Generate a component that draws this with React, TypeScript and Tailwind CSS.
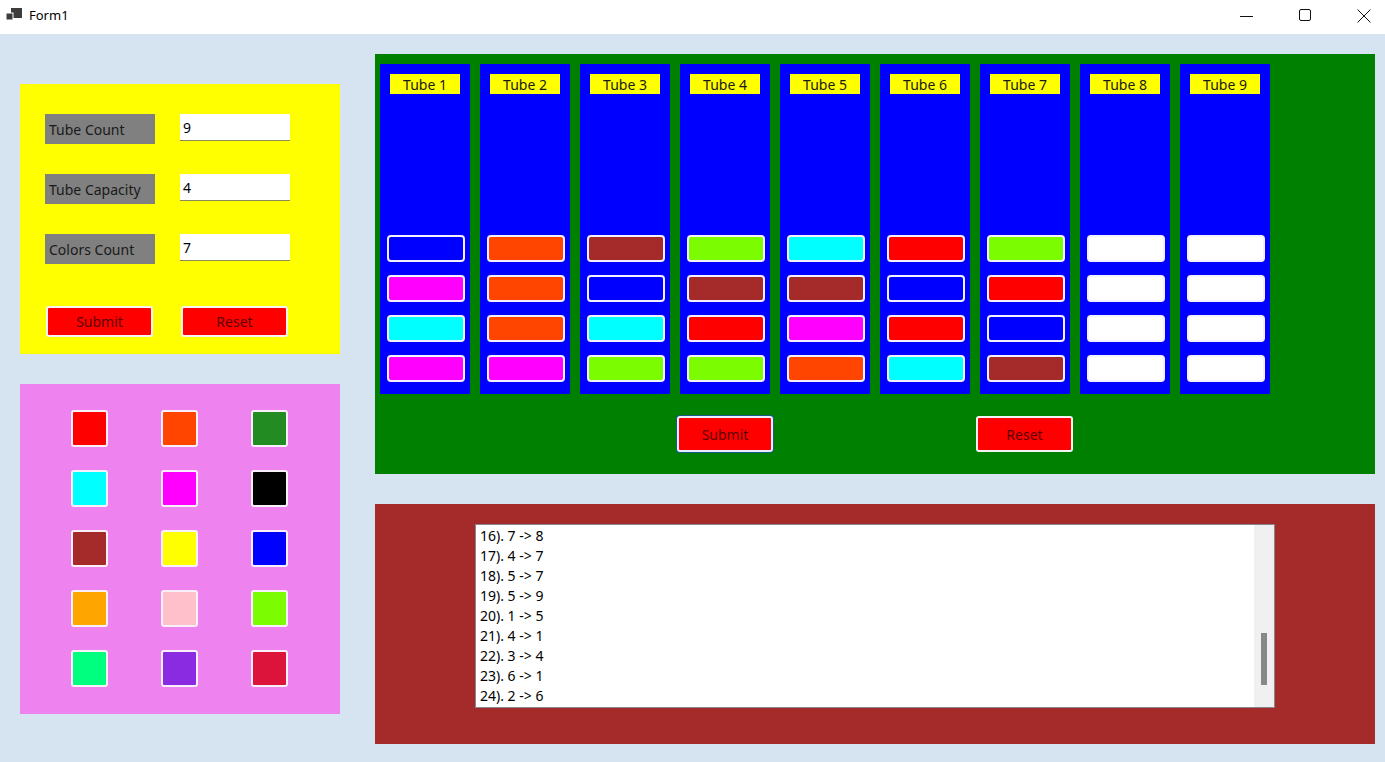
import React from 'react'

const font = { fontFamily: '"Noto Sans", "Open Sans", sans-serif' }

const tubes: string[][] = [
  ['bg-[#0000ff]', 'bg-[#ff00ff]', 'bg-[#00ffff]', 'bg-[#ff00ff]'],
  ['bg-[#ff4500]', 'bg-[#ff4500]', 'bg-[#ff4500]', 'bg-[#ff00ff]'],
  ['bg-[#a52a2a]', 'bg-[#0000ff]', 'bg-[#00ffff]', 'bg-[#7cfc00]'],
  ['bg-[#7cfc00]', 'bg-[#a52a2a]', 'bg-[#ff0000]', 'bg-[#7cfc00]'],
  ['bg-[#00ffff]', 'bg-[#a52a2a]', 'bg-[#ff00ff]', 'bg-[#ff4500]'],
  ['bg-[#ff0000]', 'bg-[#0000ff]', 'bg-[#ff0000]', 'bg-[#00ffff]'],
  ['bg-[#7cfc00]', 'bg-[#ff0000]', 'bg-[#0000ff]', 'bg-[#a52a2a]'],
  ['bg-white', 'bg-white', 'bg-white', 'bg-white'],
  ['bg-white', 'bg-white', 'bg-white', 'bg-white'],
]

const palette = [
  'bg-[#ff0000]', 'bg-[#ff4500]', 'bg-[#228b22]',
  'bg-[#00ffff]', 'bg-[#ff00ff]', 'bg-[#000000]',
  'bg-[#a52a2a]', 'bg-[#ffff00]', 'bg-[#0000ff]',
  'bg-[#ffa500]', 'bg-[#ffc0cb]', 'bg-[#7cfc00]',
  'bg-[#00ff7f]', 'bg-[#8a2be2]', 'bg-[#dc143c]',
]

const moves = [
  '16). 7 -> 8',
  '17). 4 -> 7',
  '18). 5 -> 7',
  '19). 5 -> 9',
  '20). 1 -> 5',
  '21). 4 -> 1',
  '22). 3 -> 4',
  '23). 6 -> 1',
  '24). 2 -> 6',
]

const fields = [
  { label: 'Tube Count', value: '9' },
  { label: 'Tube Capacity', value: '4' },
  { label: 'Colors Count', value: '7' },
]

function TitleBar() {
  return (
    <div className="h-[34px] bg-white flex items-center shrink-0">
      <svg width="16" height="15" viewBox="0 0 16 15" className="ml-[6px] mt-[-3px]">
        <rect x="5" y="0" width="11" height="10" fill="#3c3c3c" />
        <rect x="0" y="5" width="7" height="7" fill="#3c3c3c" stroke="#fff" strokeWidth="1" />
      </svg>
      <span className="ml-[7px] text-[13px] text-black mt-[-3px]" style={font}>Form1</span>
      <div className="ml-auto flex items-center gap-[46px] pr-[14px] mt-[-3px]">
        <svg width="13" height="14" viewBox="0 0 13 14"><path d="M0 7.5h13" stroke="#111" strokeWidth="1" /></svg>
        <svg width="12" height="13" viewBox="0 0 12 13"><rect x="0.5" y="0.5" width="11" height="11" rx="1.5" fill="none" stroke="#111" strokeWidth="1" /></svg>
        <svg width="14" height="14" viewBox="0 0 14 14"><path d="M0.5 0.5l13 13M13.5 0.5l-13 13" stroke="#111" strokeWidth="1" /></svg>
      </div>
    </div>
  )
}

function RedButton({ label, className }: { label: string; className: string }) {
  return (
    <div
      className={`bg-[#ff0000] border-2 border-[#f4f4f4] rounded-[3px] flex items-center justify-center text-[14px] text-[#5c0000] ${className}`}
      style={font}
    >
      {label}
    </div>
  )
}

export default function App() {
  return (
    <div className="w-[1385px] h-[762px] bg-[#d6e4f2] flex flex-col overflow-hidden" style={font}>
      <TitleBar />
      <div className="flex">
        {/* left column */}
        <div className="ml-[20px] mt-[50px] flex flex-col gap-[30px]">
          <div className="w-[320px] h-[270px] bg-[#ffff00] pl-[25px] pt-[30px]">
            <div className="flex flex-col gap-[30px]">
              {fields.map((f) => (
                <div key={f.label} className="flex items-start">
                  <div className="w-[110px] h-[30px] bg-[#808080] flex items-center pl-[4px] text-[14px] text-[#1a1a1a]">
                    {f.label}
                  </div>
                  <div className="ml-[25px] w-[110px] h-[27px] bg-white border-b border-[#8a8a5a] flex items-center pl-[3px] text-[14px] text-black">
                    {f.value}
                  </div>
                </div>
              ))}
            </div>
            <div className="flex gap-[28px] mt-[42px] ml-[1px]">
              <RedButton label="Submit" className="w-[107px] h-[31px]" />
              <RedButton label="Reset" className="w-[107px] h-[31px]" />
            </div>
          </div>
          <div className="w-[320px] h-[330px] bg-[#ee82ee] pl-[51px] pt-[26px]">
            <div className="grid grid-cols-[37px_37px_37px] gap-x-[53px] gap-y-[23px]">
              {palette.map((c, i) => (
                <div key={i} className={`w-[37px] h-[37px] border-2 border-[#f8f0f8] rounded-[3px] ${c}`} />
              ))}
            </div>
          </div>
        </div>

        {/* right column */}
        <div className="ml-[35px] mt-[20px] flex flex-col gap-[30px]">
          <div className="w-[1000px] h-[420px] bg-[#008000] pl-[5px] pt-[10px]">
            <div className="flex gap-[10px]">
              {tubes.map((cells, t) => (
                <div key={t} className="w-[90px] h-[330px] bg-[#0000ff] flex flex-col items-center pt-[10px] pb-[12px]">
                  <div className="w-[70px] h-[20px] bg-[#ffff00] flex items-center justify-center text-[14px] text-[#1a1a1a]">
                    Tube {t + 1}
                  </div>
                  <div className="mt-auto ml-[2px] flex flex-col gap-[13px]">
                    {cells.map((c, i) => (
                      <div key={i} className={`w-[78px] h-[27px] border-2 border-[#f4f0ff] rounded-[4px] ${c}`} />
                    ))}
                  </div>
                </div>
              ))}
            </div>
            <div className="flex mt-[22px] ml-[297px] gap-[203px]">
              <RedButton label="Submit" className="w-[96px] h-[36px] !border-[#e8f0ff] shadow-[0_0_0_1px_#1a5a8a]" />
              <RedButton label="Reset" className="w-[97px] h-[36px]" />
            </div>
          </div>
          <div className="w-[1000px] h-[240px] bg-[#a52a2a] pl-[100px] pt-[20px]">
            <div className="w-[800px] h-[184px] bg-white border border-[#828790] flex">
              <div className="flex-1 pl-[4px] pt-[1px]">
                {moves.map((m) => (
                  <div key={m} className="h-[20px] leading-[20px] text-[14px] text-black">{m}</div>
                ))}
              </div>
              <div className="w-[20px] bg-[#f0f0f0] relative">
                <div className="absolute left-[7px] top-[108px] w-[6px] h-[52px] bg-[#888888]" />
              </div>
            </div>
          </div>
        </div>
      </div>
    </div>
  )
}
